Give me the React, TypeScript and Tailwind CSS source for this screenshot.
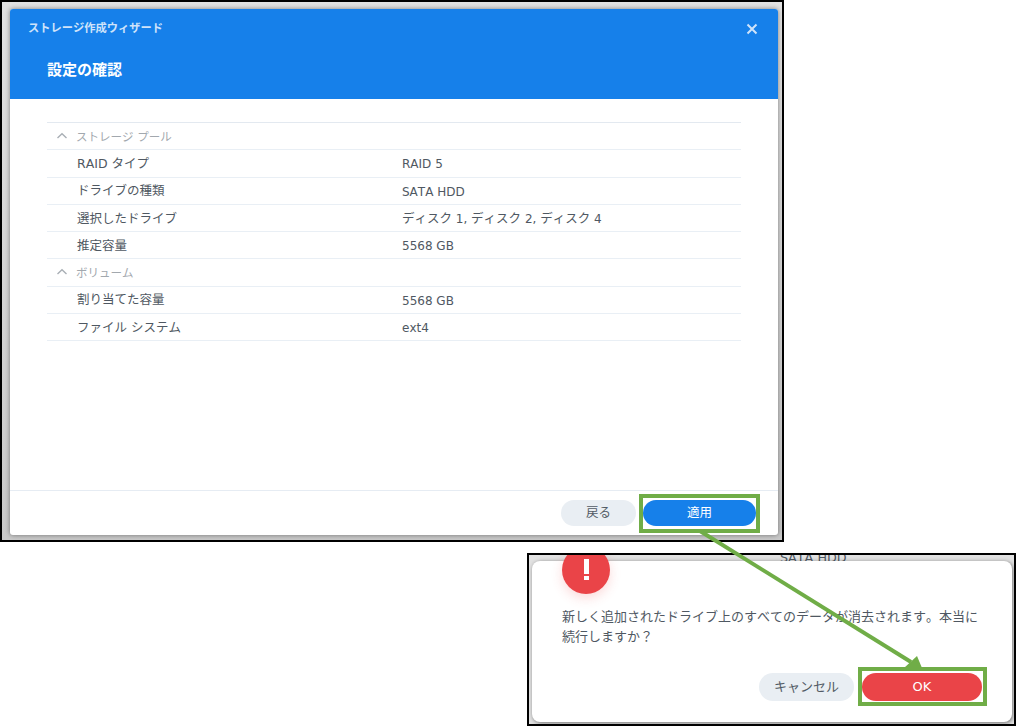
const FONT = "font-['DejaVu_Sans','Noto_Sans_CJK_JP',sans-serif] [font-kerning:none]";

function Chevron() {
  return (
    <svg width="12" height="12" viewBox="0 0 12 12" className="mr-[8px] ml-[9px] shrink-0" fill="none" stroke="#a9afb5" strokeWidth="1.4">
      <path d="M1.5 8 L6 3.8 L10.5 8" />
    </svg>
  );
}

function SectionRow({ label }: { label: string }) {
  return (
    <div className="flex h-[27.25px] items-center border-b border-[#e9eff5] text-[11.5px] text-[#a2a8ae]">
      <Chevron />
      <span className="pt-[2px]">{label}</span>
    </div>
  );
}

function DataRow({ label, value }: { label: string; value: React.ReactNode }) {
  return (
    <div className="flex h-[27.25px] items-center border-b border-[#e9eff5] pt-[2px] text-[12.5px] text-[#4f5862]">
      <span className="ml-[30px] w-[325px]">{label}</span>
      <span className="text-[12px]">{value}</span>
    </div>
  );
}

function Kana({ children }: { children: string }) {
  return <span className="text-[12.5px]">{children}</span>;
}

export default function App() {
  return (
    <div className={`relative h-[726px] w-[1016px] overflow-hidden bg-white ${FONT}`}>
      {/* upper screenshot */}
      <div className="h-[542px] w-[784px] border-2 border-black bg-gradient-to-b from-[#e2e2e2] to-[#c9c9c9] pt-[7px] pl-[8px]">
        <div className="flex h-[526px] w-[768px] flex-col overflow-hidden rounded-[3px] bg-white shadow-[0_0_5px_rgba(0,0,0,0.45)]">
          <div className="h-[90px] shrink-0 bg-[#1680ea] pl-[18px]">
            <div className="flex h-[39px] items-center justify-between pr-[20px]">
              <span className="pt-[2px] text-[11.25px] font-bold text-[#cfe3fa]">ストレージ作成ウィザード</span>
              <svg width="12" height="12" viewBox="0 0 12 12" stroke="#cfe3fa" strokeWidth="2">
                <path d="M1.5 1.5 L10.5 10.5 M10.5 1.5 L1.5 10.5" />
              </svg>
            </div>
            <div className="ml-[19px] mt-[11px] text-[15px] font-bold leading-[22px] text-white">設定の確認</div>
          </div>
          <div className="flex-1 px-[37px] pt-[23px]">
            <div className="border-t border-[#e3e9f0]">
              <SectionRow label="ストレージ プール" />
              <DataRow label="RAID タイプ" value="RAID 5" />
              <DataRow label="ドライブの種類" value="SATA HDD" />
              <DataRow
                label="選択したドライブ"
                value={
                  <>
                    <Kana>ディスク</Kana> 1, <Kana>ディスク</Kana> 2, <Kana>ディスク</Kana> 4
                  </>
                }
              />
              <DataRow label="推定容量" value="5568 GB" />
              <SectionRow label="ボリューム" />
              <DataRow label="割り当てた容量" value="5568 GB" />
              <DataRow label="ファイル システム" value="ext4" />
            </div>
          </div>
          <div className="flex h-[45px] shrink-0 items-center justify-end gap-[3px] border-t border-[#e6ecf3] pr-[18px]">
            <button className="h-[26px] w-[75px] rounded-full bg-[#e9eef3] pt-[1px] text-[12.5px] text-[#525b65]">戻る</button>
            <div className="flex h-[39px] w-[121px] items-center justify-center border-[4px] border-[#70ad47]">
              <button className="h-[26px] w-[113px] rounded-full bg-[#1680ea] pt-[1px] text-[12.5px] text-white">適用</button>
            </div>
          </div>
        </div>
      </div>

      {/* lower screenshot */}
      <div className="relative ml-[527px] mt-[11px] h-[173px] w-[489px] overflow-hidden border-2 border-black bg-[#e2e2e2] pt-[6px] pl-[3px]">
        <div className="absolute left-[251px] top-[-7px] text-[12.75px] text-[#4f5862]">SATA HDD</div>
        <div className="relative h-[161px] w-[480px] rounded-[8px] bg-white shadow-[1px_1px_4px_rgba(0,0,0,0.5)]">
          <div className="absolute left-[30px] top-[-15px] flex h-[48px] w-[48px] items-center justify-center rounded-full bg-[#ea4448] shadow-[0_4px_12px_rgba(234,68,72,0.2)]">
            <svg width="5" height="21" viewBox="0 0 5 21" fill="#fff" className="mb-[2px]">
              <rect width="5" height="15" />
              <rect y="17" width="5" height="4" />
            </svg>
          </div>
          <p className="absolute left-[30px] top-[46px] w-[420px] text-[13px] leading-[20px] text-[#4f5862]">
            新しく追加されたドライブ上のすべてのデータが消去されます。本当に続行しますか？
          </p>
          <div className="absolute bottom-[16px] right-[25px] flex items-center gap-[4px]">
            <button className="h-[28px] w-[95px] rounded-full bg-[#e9eef3] text-[13px] text-[#525b65]">キャンセル</button>
            <div className="flex h-[39px] w-[129px] items-center justify-start border-[4px] border-[#70ad47]">
              <button className="h-[28px] w-[120px] rounded-full bg-[#ea4448] text-[13px] text-white">OK</button>
            </div>
          </div>
        </div>
      </div>

      {/* connector arrow */}
      <svg className="absolute left-0 top-0" width="1016" height="726" fill="none">
        <path d="M700 531 L911 662" stroke="#70ad47" strokeWidth="4" />
        <path d="M922 668 L904 668 L917 656 Z" fill="#70ad47" />
      </svg>
    </div>
  );
}
